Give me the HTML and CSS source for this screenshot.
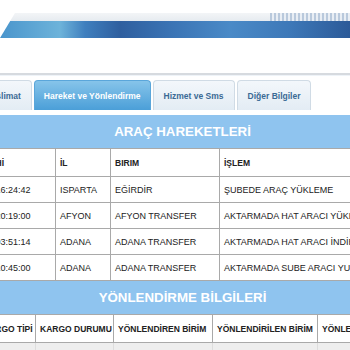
FILE: index.html
```html
<!DOCTYPE html>
<html lang="tr">
<head>
  <meta charset="UTF-8">
  <title>Kargo Takip - Hareket ve Yönlendirme</title>
  <link rel="stylesheet" href="styles.css">
</head>
<body>
  <div class="banner">
    <div class="banner-top"></div>
    <div class="banner-bar"></div>
  </div>

  <div class="tabs">
    <a class="tab">Teslimat</a>
    <a class="tab active">Hareket ve Yönlendirme</a>
    <a class="tab">Hizmet ve Sms</a>
    <a class="tab">Diğer Bilgiler</a>
  </div>

  <div class="panel">
    <div class="section-title">ARAÇ HAREKETLERİ</div>
    <table class="grid moves">
      <colgroup>
        <col class="c-date"><col class="c-city"><col class="c-unit"><col class="c-op">
      </colgroup>
      <tr class="head">
        <th>İŞLEM TARİHİ</th><th>İL</th><th>BIRIM</th><th>İŞLEM</th>
      </tr>
      <tr><td>16.03.2020 16:24:42</td><td>ISPARTA</td><td>EĞİRDİR</td><td>ŞUBEDE ARAÇ YÜKLEME</td></tr>
      <tr><td>16.03.2020 20:19:00</td><td>AFYON</td><td>AFYON TRANSFER</td><td>AKTARMADA HAT ARACI YÜKLEME</td></tr>
      <tr><td>17.03.2020 03:51:14</td><td>ADANA</td><td>ADANA TRANSFER</td><td>AKTARMADA HAT ARACI İNDİRME</td></tr>
      <tr><td>17.03.2020 10:45:00</td><td>ADANA</td><td>ADANA TRANSFER</td><td>AKTARMADA SUBE ARACI YUKLEME</td></tr>
    </table>

    <div class="section-title">YÖNLENDİRME BİLGİLERİ</div>
    <table class="grid routes">
      <colgroup>
        <col class="c-no"><col class="c-type"><col class="c-state"><col class="c-from"><col class="c-to"><col class="c-rest">
      </colgroup>
      <tr class="head">
        <th>NO</th><th>KARGO TİPİ</th><th>KARGO DURUMU</th><th>YÖNLENDİREN BİRİM</th><th>YÖNLENDİRİLEN BİRİM</th><th>YÖNLENDİRME TARİHİ</th>
      </tr>
      <tr class="empty"><td></td><td></td><td></td><td></td><td></td><td></td></tr>
    </table>
  </div>
</body>
</html>
```

FILE: styles.css
```css
body {
  margin: 0;
  background-color: #ffffff;
  font-family: "Liberation Sans", Arial, sans-serif;
  color: #222;
  overflow: hidden;
}

.banner {
  margin-top: 13px;
  height: 25px;
  clip-path: polygon(15px 0, 100% 0, 100% 100%, 0 100%);
}
.banner-top {
  height: 8px;
  background:
    repeating-linear-gradient(90deg, #b9c9dc 0 2px, #e9eef4 2px 4px) 270px 0 / 100% 100% no-repeat,
    linear-gradient(180deg, #f3f5f7, #e6ebf0);
}
.banner-bar {
  height: 17px;
  background: linear-gradient(90deg, #4a95cc 0, #6db3da 60px, #3f7fbe 85px, #2f5f9f 120px, #3a73b4 170px, #4a8ac7 230px, #3d78b8 290px, #2c5a98 350px);
}

.tabs {
  margin-top: 35px;
  margin-left: -24px;
  border-top: 2px solid #d6dadf;
  box-shadow: inset 0 1px 0 #eef3f8;
  padding-top: 5px;
  display: flex;
  gap: 2px;
}
.tab {
  height: 30px;
  line-height: 30px;
  padding: 0 10px;
  font-size: 8.5px;
  font-weight: bold;
  color: #3b6a95;
  background: linear-gradient(180deg, #f3f7fb, #e3ecf4);
  border: 1px solid #d0dbe5;
  border-bottom: none;
  border-radius: 4px 4px 0 0;
  box-sizing: border-box;
  white-space: nowrap;
}
.tab.active {
  color: #ffffff;
  background: linear-gradient(180deg, #86c4ea, #4b9fd8);
  border-color: #5aa6da;
  padding: 0 9px;
}

.panel {
  margin-top: 5px;
  margin-left: -57px;
  width: 479px;
}

.section-title {
  height: 33px;
  line-height: 33px;
  text-align: center;
  background-color: #8fc4ef;
  color: #ffffff;
  font-size: 13.3px;
  font-weight: bold;
}

.grid {
  width: 100%;
  table-layout: fixed;
  border-collapse: collapse;
  font-size: 9px;
  color: #222;
}
.grid th, .grid td {
  border: 1px solid #a9a9a9;
  padding: 0 4px;
  text-align: left;
  white-space: nowrap;
  overflow: hidden;
}
.grid td {
  height: 25px;
}
.grid th {
  height: 27px;
  font-size: 8.5px;
  font-weight: bold;
}

.c-date { width: 112px; }
.c-city { width: 55px; }
.c-unit { width: 109px; }
.c-op { width: 203px; }

.c-no { width: 35px; }
.c-type { width: 57px; }
.c-state { width: 78px; }
.c-from { width: 99px; }
.c-to { width: 105px; }
.c-rest { width: 105px; }

.routes th:nth-child(2) {
  text-align: right;
}
.routes .empty td {
  background-color: #eeeeee;
  border-color: #dddddd;
}
```
